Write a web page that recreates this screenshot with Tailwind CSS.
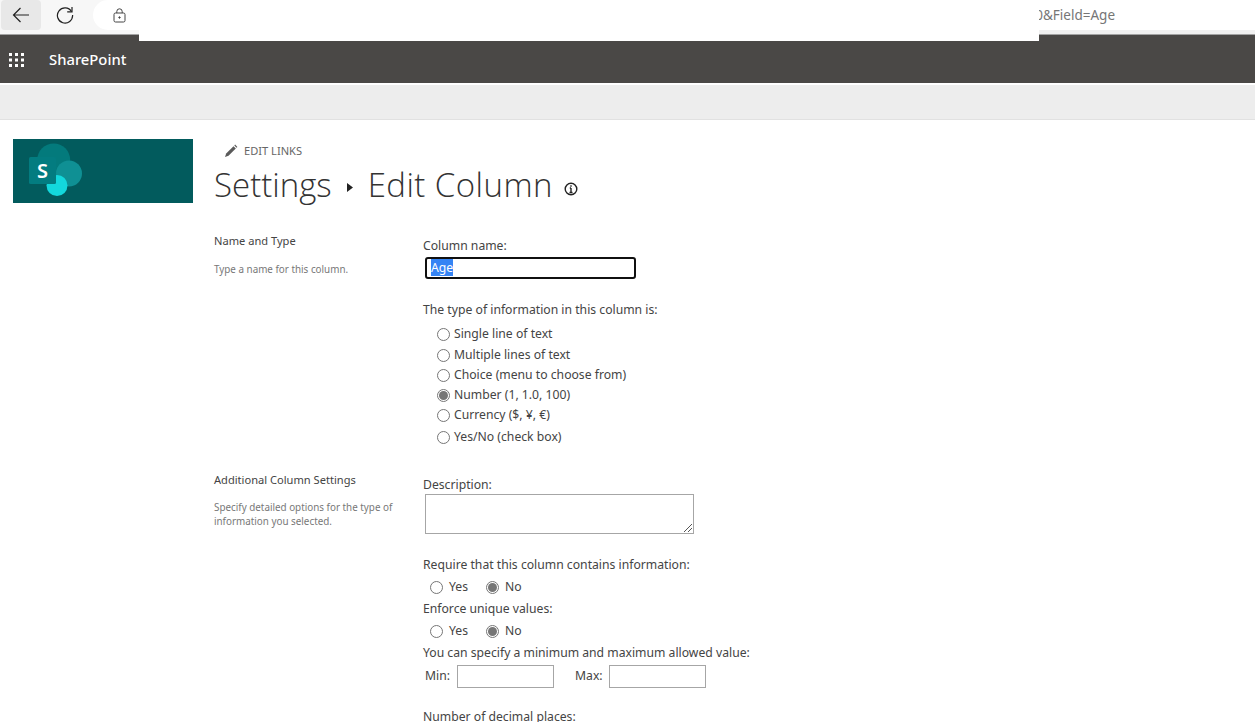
<!DOCTYPE html>
<html lang="en">
<head>
  <meta charset="UTF-8" />
  <title>Edit Column</title>
  <script src="https://cdn.jsdelivr.net/npm/@tailwindcss/browser@4"></script>
</head>
<body class="relative h-[722px] overflow-hidden bg-white font-['Noto_Sans',sans-serif] text-[#444444]">

  <!-- browser toolbar -->
  <div class="flex h-[35px] border-b border-[#a3a3a3] bg-[#f7f7f7]">
    <div class="ml-px flex h-[30px] w-10 items-center justify-center rounded-sm bg-[#e8e8e8]">
      <svg width="18" height="16" viewBox="0 0 18 16" fill="none" stroke="#222" stroke-width="1.2"><path d="M17 8H1.500M8.500 1 1.500 8l7 7"/></svg>
    </div>
    <div class="flex h-[30px] w-[52px] items-center justify-center pr-[4px]">
      <svg width="18" height="18" viewBox="0 0 18 18" fill="none" stroke="#222" stroke-width="1.2"><path d="M15.500 5.500A7.600 7.600 0 1 0 16.600 9"/><path d="M16 1v4.800h-4.800"/></svg>
    </div>
    <div class="flex h-[30px] flex-1 items-center rounded-l-[15px] bg-white pl-[20px]">
      <svg width="13" height="15" viewBox="0 0 13 15" fill="none" stroke="#444" stroke-width="1"><rect x="1" y="5" width="11" height="9" rx="1.500"/><path d="M3.800 5V3.500a2.700 2.700 0 0 1 5.400 0V5"/><circle cx="6.500" cy="9.500" r=".7" fill="#444"/></svg>
      <span class="ml-auto mr-[140px] text-[13.500px] text-[#767676]">0&amp;Field=Age</span>
    </div>
  </div>
  <div class="absolute left-[1039px] top-[30px] h-1 w-[216px] bg-[#f1f1f1]"></div>
  <!-- blanked part of the address -->
  <div class="absolute left-[139px] top-0 h-[41px] w-[900px] bg-white"></div>

  <!-- suite bar -->
  <div class="flex h-[48px] items-center bg-[#4a4846] pt-[1px] text-white">
    <svg class="ml-[8px]" width="18" height="16" viewBox="0 0 18 16" fill="#fff"><rect x="1" y="1" width="3" height="3"/><rect x="7" y="1" width="3" height="3"/><rect x="13" y="1" width="3" height="3"/><rect x="1" y="6.500" width="3" height="3"/><rect x="7" y="6.500" width="3" height="3"/><rect x="13" y="6.500" width="3" height="3"/><rect x="1" y="12" width="3" height="3"/><rect x="7" y="12" width="3" height="3"/><rect x="13" y="12" width="3" height="3"/></svg>
    <span class="ml-[23px] text-[14.800px] font-medium">SharePoint</span>
  </div>
  <!-- ribbon -->
  <div class="mt-[2px] h-[35px] border-b border-[#e1e1e1] bg-[#ededed]"></div>

  <div class="flex">
    <!-- site logo -->
    <div class="ml-[13px] mt-[19px] h-[64px] w-[180px] shrink-0 bg-[#025b5d]">
      <svg width="80" height="64" viewBox="0 0 80 64">
        <circle cx="40.700" cy="21" r="16.500" fill="#037a7c"/>
        <circle cx="56" cy="34.500" r="13" fill="#0f9094"/>
        <circle cx="44" cy="46.500" r="10.500" fill="#13d8dc"/>
        <rect x="16" y="18" width="27" height="27" rx="1.500" fill="#037c80"/>
        <text x="29.500" y="38.500" text-anchor="middle" font-size="20" font-weight="600" fill="#fff" font-family="Noto Sans, sans-serif">S</text>
      </svg>
    </div>

    <main class="ml-[21px] flex-1">
      <div class="ml-[10px] mt-[23px] flex h-4 items-center">
        <svg width="14" height="14" viewBox="0 0 14 14" fill="#5a5a5a"><path d="M1 13l1.200-3.500L9.500 2.200l2.300 2.300L4.500 11.800z"/><path d="M10.300 1.400l.8-.8 2.300 2.300-.8.8z"/></svg>
        <span class="ml-[6px] text-[11.100px] text-[#666666]">EDIT LINKS</span>
      </div>
      <h1 class="mt-[3px] flex h-[46px] items-center font-['Open_Sans',sans-serif] text-[33px] font-light leading-[46px] text-[#333333]">
        Settings
        <svg class="ml-[15px] mr-[15px] mt-[5px]" width="6" height="9" viewBox="0 0 6 9" fill="#222"><path d="M0 0l6 4.500L0 9z"/></svg>
        <span class="tracking-[0.45px]">Edit Column</span>
        <svg class="ml-[11px] mt-[7px]" width="14" height="14" viewBox="0 0 14 14" fill="none" stroke="#222" stroke-width="1.400"><circle cx="7" cy="7" r="5.800"/><path d="M7 6v4.500M5.500 10.500h3M5.800 6H7"/><path d="M7 3.300v1.500"/></svg>
      </h1>

      <!-- name and type -->
      <div class="mt-[27px] flex">
        <div class="w-[209px] shrink-0">
          <div class="-mt-[2px] text-[11.100px] leading-[16px]">Name and Type</div>
          <p class="mt-[13px] text-[9.850px] leading-[14px] text-[#777777]">Type a name for this column.</p>
        </div>
        <div class="flex-1 text-[12.200px]">
          <div class="mt-[2px] leading-[18px]">Column name:</div>
          <div class="ml-[2px] mt-[2px] h-[22px] w-[211px] rounded-[3px] border-2 border-[#101010] pl-[4px] text-[12.200px] leading-[18px]"><span class="bg-[#3584f4] text-white">Age</span></div>
          <div class="mt-[22px] leading-[18px]">The type of information in this column is:</div>
          <div class="ml-[14px] mt-[5px] flex flex-col">
            <label class="flex h-[21px] items-center gap-[4px]"><span class="h-[13px] w-[13px] rounded-full border border-[#767676]"></span>Single line of text</label>
            <label class="flex h-[20px] items-center gap-[4px]"><span class="h-[13px] w-[13px] rounded-full border border-[#767676]"></span>Multiple lines of text</label>
            <label class="flex h-[20px] items-center gap-[4px]"><span class="h-[13px] w-[13px] rounded-full border border-[#767676]"></span>Choice (menu to choose from)</label>
            <label class="flex h-[20px] items-center gap-[4px]"><span class="flex h-[13px] w-[13px] items-center justify-center rounded-full border border-[#767676]"><span class="h-[9px] w-[9px] rounded-full bg-[#767676]"></span></span>Number (1, 1.0, 100)</label>
            <label class="flex h-[20px] items-center gap-[4px]"><span class="h-[13px] w-[13px] rounded-full border border-[#767676]"></span>Currency ($, ¥, €)</label>
            <label class="flex h-[22px] items-center gap-[4px] pt-[2px]"><span class="h-[13px] w-[13px] rounded-full border border-[#767676]"></span>Yes/No (check box)</label>
          </div>
        </div>
      </div>

      <!-- additional column settings -->
      <div class="mt-[25px] flex">
        <div class="w-[209px] shrink-0">
          <div class="text-[11.100px] leading-[16px]">Additional Column Settings</div>
          <p class="mt-[12px] w-[190px] text-[9.850px] leading-[14px] text-[#777777]">Specify detailed options for the type of information you selected.</p>
        </div>
        <div class="flex-1 text-[12.200px]">
          <div class="mt-[4px] leading-[18px]">Description:</div>
          <div class="relative ml-[2px] h-[40px] w-[269px] border border-[#a6a6a6]">
            <svg class="absolute bottom-0 right-0" width="10" height="10" viewBox="0 0 10 10" stroke="#555" stroke-width="1"><path d="M1 9l8-8M5 9l4-4"/></svg>
          </div>
          <div class="mt-[22px] leading-[18px]">Require that this column contains information:</div>
          <div class="ml-[7px] flex h-[26px] items-center">
            <span class="h-[13px] w-[13px] rounded-full border border-[#767676]"></span><span class="ml-[6px] w-[37px]">Yes</span>
            <span class="flex h-[13px] w-[13px] items-center justify-center rounded-full border border-[#767676]"><span class="h-[9px] w-[9px] rounded-full bg-[#767676]"></span></span><span class="ml-[6px]">No</span>
          </div>
          <div class="leading-[18px]">Enforce unique values:</div>
          <div class="ml-[7px] flex h-[26px] items-center">
            <span class="h-[13px] w-[13px] rounded-full border border-[#767676]"></span><span class="ml-[6px] w-[37px]">Yes</span>
            <span class="flex h-[13px] w-[13px] items-center justify-center rounded-full border border-[#767676]"><span class="h-[9px] w-[9px] rounded-full bg-[#767676]"></span></span><span class="ml-[6px]">No</span>
          </div>
          <div class="leading-[18px]">You can specify a minimum and maximum allowed value:</div>
          <div class="ml-[2px] mt-[3px] flex h-[23px] items-center">
            <span class="w-[32px]">Min:</span>
            <span class="h-[23px] w-[97px] border border-[#a6a6a6]"></span>
            <span class="ml-[21px] w-[34px]">Max:</span>
            <span class="h-[23px] w-[97px] border border-[#a6a6a6]"></span>
          </div>
          <div class="mt-[20px] leading-[18px]">Number of decimal places:</div>
        </div>
      </div>
    </main>
  </div>
</body>
</html>
